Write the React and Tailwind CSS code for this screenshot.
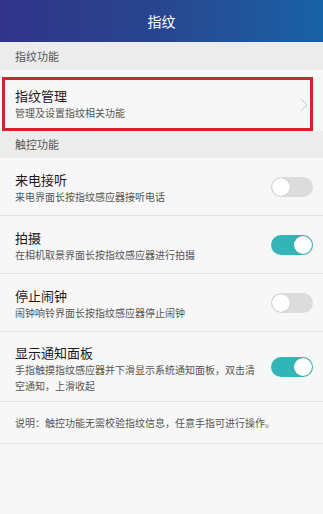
import React from "react";

const font = { fontFamily: '"Noto Sans CJK SC", "Noto Sans", sans-serif' };

function Toggle({ on }) {
  return (
    <div
      className={`relative w-[42px] h-[20px] rounded-full shrink-0 ${on ? "bg-[#33b4b7]" : "bg-[#dcdcdc]"}`}
    >
      <div
        className={`absolute top-[1px] w-[18px] h-[18px] rounded-full bg-white shadow-[0_0_1px_rgba(0,0,0,0.3)] ${on ? "right-[1px]" : "left-[1px]"}`}
      />
    </div>
  );
}

function Section({ label, h }) {
  return (
    <div className={`${h} bg-[#ececec] flex items-center pl-[15px] text-[11px] text-[#555]`}>
      {label}
    </div>
  );
}

const rows = [
  { title: "来电接听", sub: "来电界面长按指纹感应器接听电话", on: false },
  { title: "拍摄", sub: "在相机取景界面长按指纹感应器进行拍摄", on: true },
  { title: "停止闹钟", sub: "闹钟响铃界面长按指纹感应器停止闹钟", on: false },
  { title: "显示通知面板", sub: "手指触摸指纹感应器并下滑显示系统通知面板，双击清空通知，上滑收起", on: true },
];

export default function App() {
  return (
    <div className="w-[323px] h-[514px] bg-[#f7f7f7] overflow-hidden" style={font}>
      <div className="h-[42px] bg-gradient-to-r from-[#31348a] via-[#27468f] to-[#1762a7] flex items-center justify-center text-white text-[14px]">
        指纹
      </div>
      <Section label="指纹功能" h="h-[28px]" />
      <div className="pt-[7px] pl-[2px]">
        <div className="w-[311px] h-[54px] border-[3px] border-[#d3232f] flex items-center pl-[10px] pr-[2px]">
          <div className="flex-1 -mt-[1px]">
            <div className="text-[13px] leading-[18px] text-[#1a1a1a]">指纹管理</div>
            <div className="text-[10px] leading-[16px] text-[#555]">管理及设置指纹相关功能</div>
          </div>
          <svg width="8" height="14" viewBox="0 0 8 14" className="mt-[1px]">
            <polyline points="1,1 7,7 1,13" fill="none" stroke="#c4c4c4" strokeWidth="1" />
          </svg>
        </div>
      </div>
      <Section label="触控功能" h="h-[27px]" />
      {rows.map((r, i) => (
        <div key={i} className="flex items-center border-b border-[#e3e3e3] pl-[15px] pr-[10px]">
          <div className={`flex-1 ${i === 3 ? "pt-[12px] pb-[7px]" : "pt-[13px] pb-[10px]"} pr-[12px]`}>
            <div className="text-[13px] leading-[18px] text-[#1a1a1a]">{r.title}</div>
            <div className="text-[10px] leading-[16px] text-[#555]">{r.sub}</div>
          </div>
          <Toggle on={r.on} />
        </div>
      ))}
      <div className="h-[42px] flex items-center pl-[15px] text-[10px] text-[#555] border-b border-[#e8e8e8]">
        说明：触控功能无需校验指纹信息，任意手指可进行操作。
      </div>
    </div>
  );
}
